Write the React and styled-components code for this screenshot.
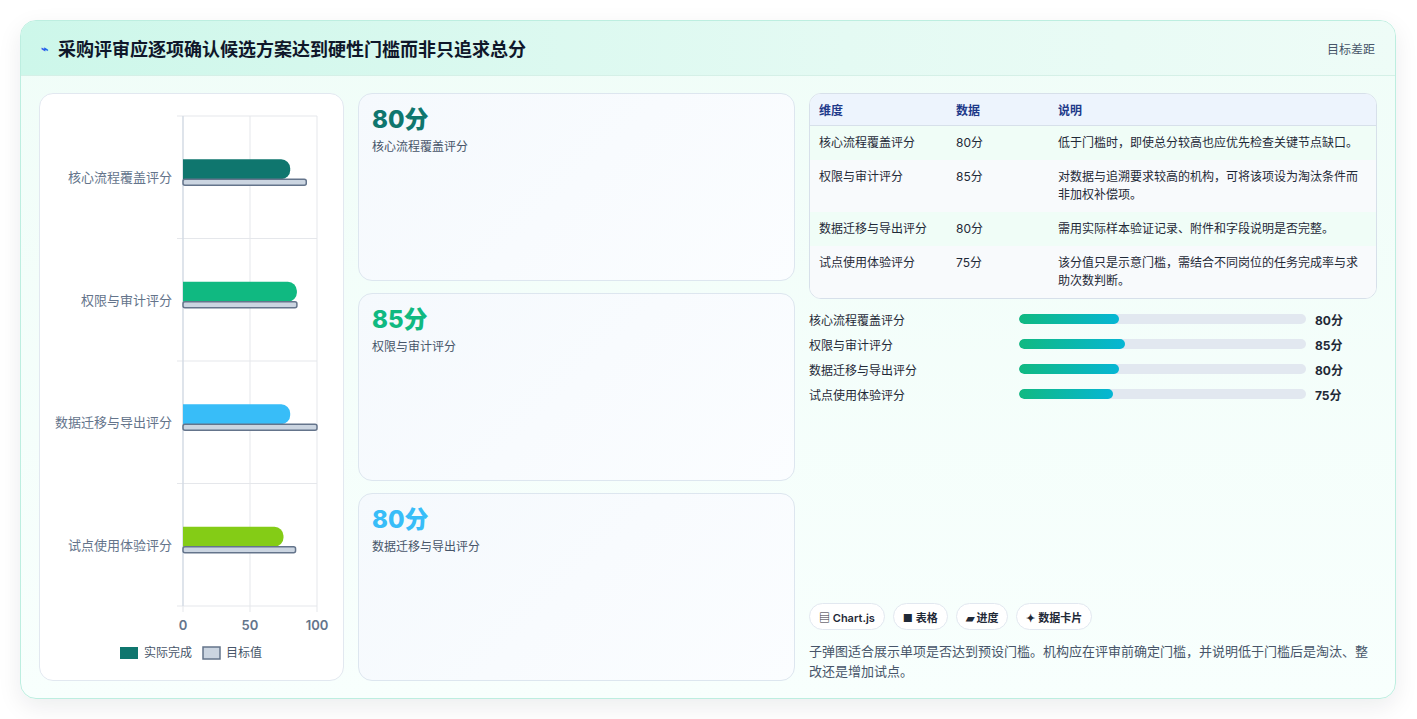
import React from "react";
import styled, { createGlobalStyle } from "styled-components";

const GlobalStyle = createGlobalStyle`
  html, body { margin: 0; padding: 0; background: #ffffff; }
  body { font-family: Inter, "Noto Sans CJK SC", "Noto Sans", sans-serif; color: #0f172a; }
`;

const items = [
  { name: "核心流程覆盖评分", value: 80, target: 92, color: "#0f766e", note: "低于门槛时，即使总分较高也应优先检查关键节点缺口。" },
  { name: "权限与审计评分", value: 85, target: 85, color: "#10b981", note: "对数据与追溯要求较高的机构，可将该项设为淘汰条件而非加权补偿项。" },
  { name: "数据迁移与导出评分", value: 80, target: 100, color: "#38bdf8", note: "需用实际样本验证记录、附件和字段说明是否完整。" },
  { name: "试点使用体验评分", value: 75, target: 84, color: "#84cc16", note: "该分值只是示意门槛，需结合不同岗位的任务完成率与求助次数判断。" },
];

const barPath = (x, y, w, h, r) =>
  `M${x} ${y} H${x + w - r} A${r} ${r} 0 0 1 ${x + w} ${y + r} V${y + h - r} A${r} ${r} 0 0 1 ${x + w - r} ${y + h} H${x} Z`;

const BulletChart = () => {
  const x0 = 143, w = 134, top = 22, rowH = 122.5;
  return (
    <svg width="303" height="587" viewBox="0 0 303 587">
      {[0, 1, 2, 3, 4].map((i) => (
        <line key={i} x1={137} x2={x0 + w} y1={top + i * rowH} y2={top + i * rowH} stroke="#e5e7eb" />
      ))}
      {[0, 50, 100].map((t) => (
        <g key={t}>
          <line x1={x0 + (t / 100) * w} x2={x0 + (t / 100) * w} y1={top} y2={top + 4 * rowH + 6} stroke="#e5e7eb" />
          <text x={x0 + (t / 100) * w} y={536} fontSize="13" fontWeight="600" fill="#64748b" textAnchor="middle">{t}</text>
        </g>
      ))}
      <line x1={x0} x2={x0} y1={top} y2={top + 4 * rowH} stroke="#cbd5e1" />
      {items.map((it, i) => {
        const cy = top + i * rowH + rowH / 2;
        return (
          <g key={it.name}>
            <text x={132} y={cy + 5} fontSize="13" fill="#64748b" textAnchor="end">{it.name}</text>
            <path d={barPath(x0, cy - 18, (it.value / 100) * w, 20, 9)} fill={it.color} />
            <rect x={x0} y={cy + 2} width={(it.target / 100) * w} height={6} rx={2} fill="#cbd5e1" stroke="#64748b" strokeWidth="1.5" />
          </g>
        );
      })}
      <rect x={80} y={553} width={18} height={12} fill="#0f766e" />
      <text x={104} y={563} fontSize="12" fill="#475569">实际完成</text>
      <rect x={163} y={553} width={17} height={12} fill="#cbd5e1" stroke="#64748b" strokeWidth="1.5" />
      <text x={186} y={563} fontSize="12" fill="#475569">目标值</text>
    </svg>
  );
};

export default function App() {
  return (
    <>
      <GlobalStyle />
      <Page>
        <Frame>
          <Header>
            <Title><Spark>⌁</Spark>采购评审应逐项确认候选方案达到硬性门槛而非只追求总分</Title>
            <Tag>目标差距</Tag>
          </Header>
          <Body>
            <ChartCard><BulletChart /></ChartCard>
            <CardCol>
              {items.slice(0, 3).map((it) => (
                <StatCard key={it.name}>
                  <Big $color={it.color}>{it.value}分</Big>
                  <Small>{it.name}</Small>
                </StatCard>
              ))}
            </CardCol>
            <Right>
              <Table>
                <colgroup>
                  <col style={{ width: 137 }} />
                  <col style={{ width: 102 }} />
                  <col />
                </colgroup>
                <thead>
                  <tr><Th>维度</Th><Th>数据</Th><Th>说明</Th></tr>
                </thead>
                <tbody>
                  {items.map((it, i) => (
                    <Tr key={it.name} $alt={i % 2 === 1}>
                      <Td>{it.name}</Td><Td>{it.value}分</Td><Td>{it.note}</Td>
                    </Tr>
                  ))}
                </tbody>
              </Table>
              <Progress>
                {items.map((it) => (
                  <PRow key={it.name}>
                    <PLabel>{it.name}</PLabel>
                    <Track><Fill style={{ width: `${(it.value / 100) * 43.5}%` }} /></Track>
                    <PValue>{it.value}分</PValue>
                  </PRow>
                ))}
              </Progress>
              <Spacer />
              <Chips>
                <Chip>▤ Chart.js</Chip>
                <Chip>■ 表格</Chip>
                <Chip>▰ 进度</Chip>
                <Chip>✦ 数据卡片</Chip>
              </Chips>
              <Para>子弹图适合展示单项是否达到预设门槛。机构应在评审前确定门槛，并说明低于门槛后是淘汰、整改还是增加试点。</Para>
            </Right>
          </Body>
        </Frame>
      </Page>
    </>
  );
}

const Page = styled.div`
  padding: 20px;
  height: 719px;
  box-sizing: border-box;
`;
const Frame = styled.div`
  width: 1376px;
  height: 679px;
  box-sizing: border-box;
  border: 1px solid #bdeee0;
  border-radius: 16px;
  background: linear-gradient(180deg, #f0fdf8 0%, #f8fffd 100%);
  box-shadow: 0 8px 24px rgba(15, 23, 42, 0.08);
  display: flex;
  flex-direction: column;
  overflow: hidden;
`;
const Header = styled.div`
  height: 54px;
  flex-shrink: 0;
  background: linear-gradient(90deg, #cdf7ea 0%, #e4faf3 60%, #eefcf7 100%);
  border-bottom: 1px solid #d5f0e7;
  display: flex;
  align-items: center;
  justify-content: space-between;
  padding: 0 20px;
`;
const Title = styled.h1`
  margin: 0;
  font-size: 18px;
  font-weight: 700;
  color: #0f172a;
  display: flex;
  align-items: center;
  gap: 10px;
`;
const Spark = styled.span`
  color: #2563eb;
  font-size: 12px;
`;
const Tag = styled.span`
  font-size: 12px;
  color: #475569;
`;
const Body = styled.div`
  flex: 1;
  display: flex;
  gap: 14px;
  padding: 17px 18px;
  min-height: 0;
`;
const ChartCard = styled.div`
  width: 303px;
  flex-shrink: 0;
  background: #fff;
  border: 1px solid #e2e8f0;
  border-radius: 14px;
  overflow: hidden;
`;
const CardCol = styled.div`
  width: 437px;
  flex-shrink: 0;
  display: flex;
  flex-direction: column;
  gap: 12px;
`;
const StatCard = styled.div`
  flex: 1;
  background: linear-gradient(135deg, #f5f9fd 0%, #fbfdff 100%);
  border: 1px solid #dde6ef;
  border-radius: 14px;
  padding: 11px 13px;
`;
const Big = styled.div`
  font-size: 24px;
  font-weight: 800;
  color: ${(p) => p.$color};
  line-height: 30px;
`;
const Small = styled.div`
  font-size: 12px;
  color: #475569;
  margin-top: 2px;
`;
const Right = styled.div`
  flex: 1;
  display: flex;
  flex-direction: column;
  min-width: 0;
`;
const Table = styled.table`
  width: 100%;
  table-layout: fixed;
  border-collapse: separate;
  border-spacing: 0;
  border: 1px solid #d7e0ea;
  border-radius: 12px;
  overflow: hidden;
  font-size: 12px;
  background: #fff;
`;
const Th = styled.th`
  text-align: left;
  background: #edf4fd;
  color: #1e3a8a;
  font-weight: 600;
  padding: 7px 9px;
  border-bottom: 1px solid #d7e0ea;
`;
const Tr = styled.tr`
  background: ${(p) => (p.$alt ? "#f8fafc" : "#f0fdf7")};
  & + & td { border-top: 1px solid #e2e8f0; }
`;
const Td = styled.td`
  padding: 8px 9px;
  color: #1f2937;
  vertical-align: top;
  line-height: 18px;
`;
const Progress = styled.div`
  display: flex;
  flex-direction: column;
  gap: 7px;
  margin-top: 11px;
`;
const PRow = styled.div`
  display: flex;
  align-items: center;
  height: 18px;
  font-size: 12px;
`;
const PLabel = styled.div`
  width: 210px;
  color: #1f2937;
`;
const Track = styled.div`
  width: 287px;
  height: 10px;
  border-radius: 5px;
  background: #e2e8f0;
  overflow: hidden;
`;
const Fill = styled.div`
  height: 100%;
  border-radius: 5px;
  background: linear-gradient(90deg, #10b981, #06b6d4);
`;
const PValue = styled.div`
  margin-left: 9px;
  font-weight: 700;
  color: #1f2937;
`;
const Spacer = styled.div`flex: 1;`;
const Chips = styled.div`
  display: flex;
  gap: 8px;
`;
const Chip = styled.span`
  height: 27px;
  box-sizing: border-box;
  padding: 0 9px;
  border: 1px solid #e2e8f0;
  border-radius: 14px;
  background: #fff;
  font-size: 11px;
  font-weight: 600;
  color: #1f2937;
  display: flex;
  align-items: center;
`;
const Para = styled.p`
  margin: 11px 0 0;
  font-size: 13px;
  line-height: 20px;
  color: #475569;
`;
